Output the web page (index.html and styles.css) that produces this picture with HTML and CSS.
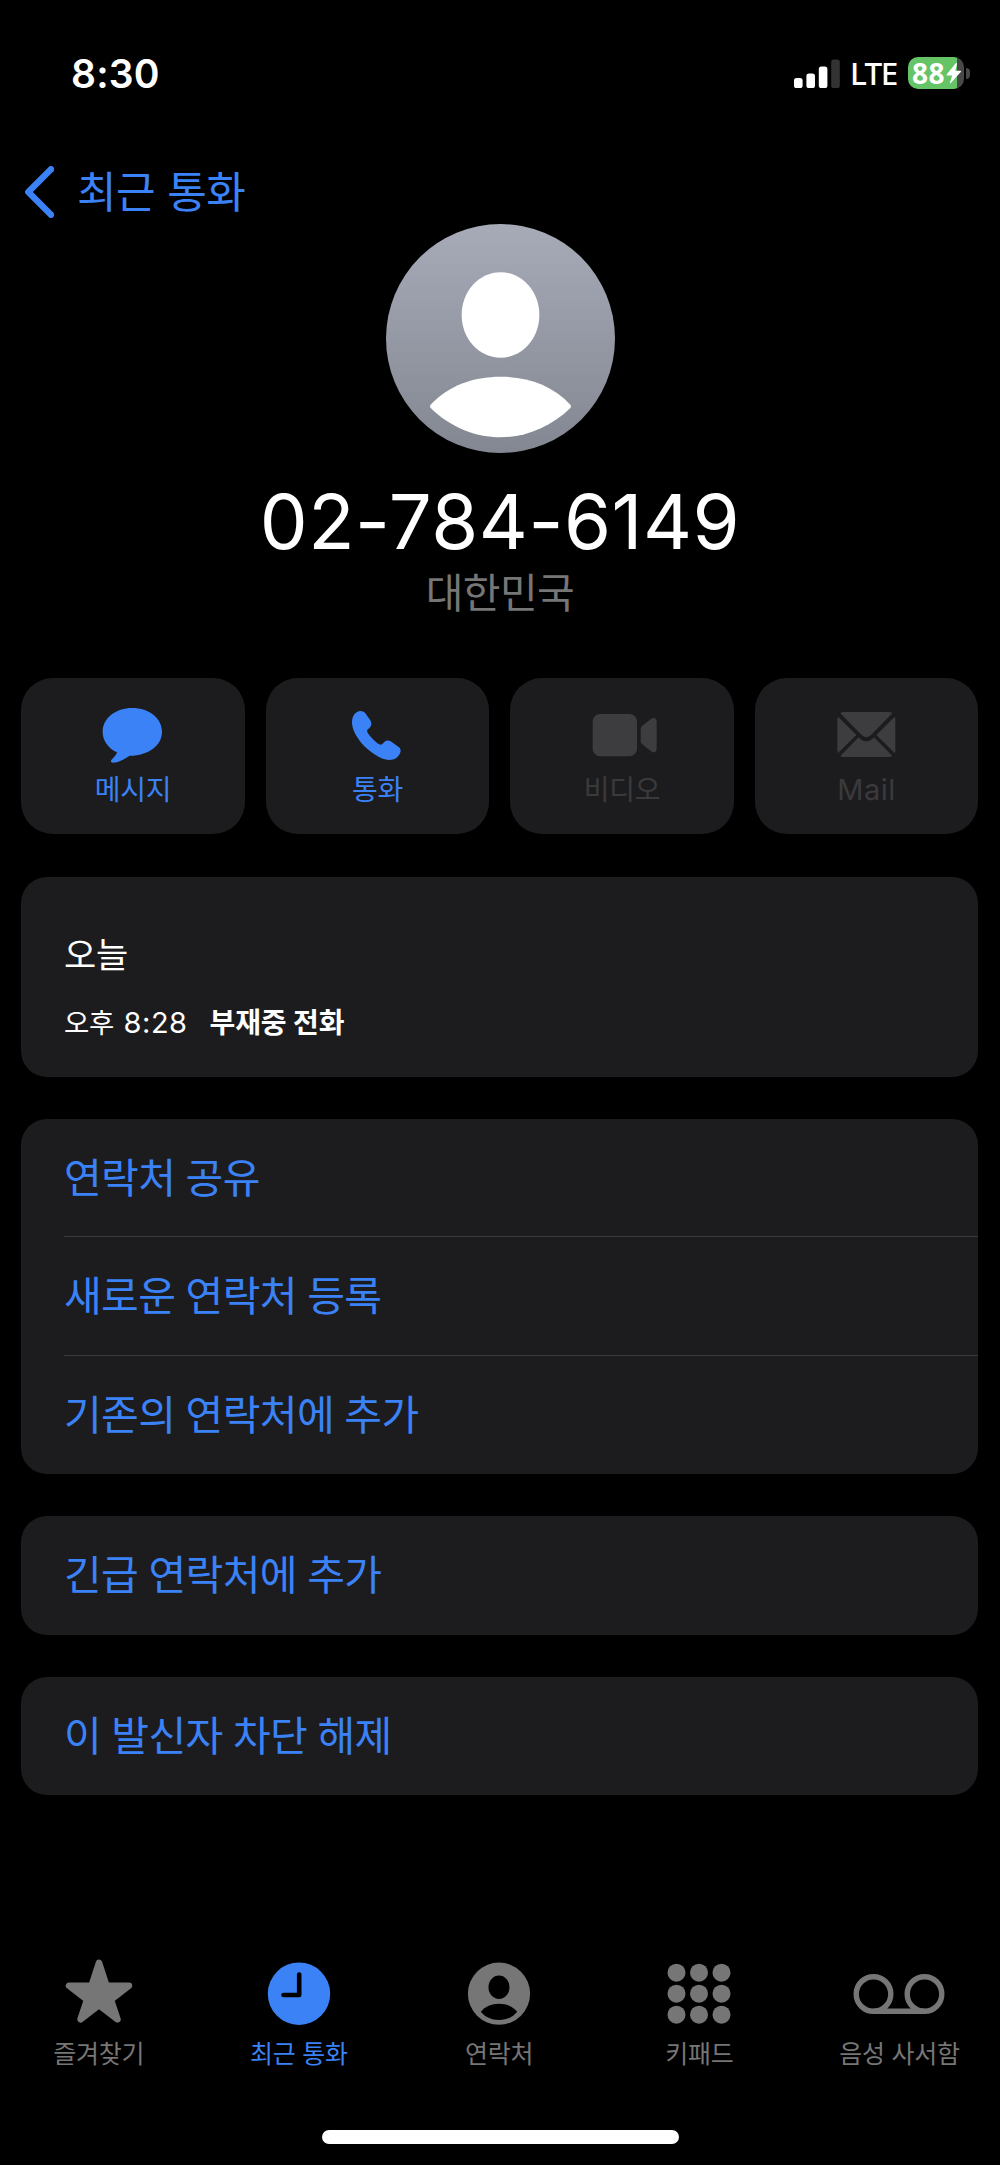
FILE: index.html
```html
<!DOCTYPE html>
<html lang="ko">
<head>
<meta charset="utf-8">
<title>최근 통화</title>
<link rel="stylesheet" href="styles.css">
</head>
<body>
<div class="screen">
  <header class="status">
    <time class="status-time">8:30</time>
    <div class="status-right">
      <svg class="signal" width="46" height="29" viewBox="0 0 46 29">
        <rect x="0" y="19" width="8.6" height="10" rx="2.6" fill="#fff"/>
        <rect x="12.4" y="14.5" width="8.6" height="14.5" rx="2.6" fill="#fff"/>
        <rect x="24.8" y="7.5" width="8.6" height="21.5" rx="2.6" fill="#fff"/>
        <rect x="37.2" y="0.5" width="8.6" height="28.5" rx="2.6" fill="#333"/>
      </svg>
      <span class="carrier">LTE</span>
      <div class="battery">
        <div class="battery-body">
          <span class="battery-level">88</span>
          <svg class="bolt" width="16" height="21" viewBox="0 0 16 21"><path d="M9.8.3 .8 11.3q-.7 1.2.6 1.2H6.2L3.8 20q-.2 1 .7.3L14.8 9q.8-1.2-.6-1.2H9.300L11 .8Q11-.5 9.800.3Z" fill="#fff"/></svg>
        </div>
        <span class="battery-nub"></span>
      </div>
    </div>
  </header>

  <nav class="nav">
    <svg width="30" height="52" viewBox="0 0 30 52"><path d="M27 3.300 4.300 26 27 48.700" fill="none" stroke="#3b82f7" stroke-width="6.400" stroke-linecap="round" stroke-linejoin="round"/></svg>
    <span class="nav-title">최근 통화</span>
  </nav>

  <section class="profile">
    <svg class="avatar" viewBox="48 42 687 687">
      <defs><linearGradient id="sky" x1="0" y1="0" x2="0" y2="1"><stop offset="0" stop-color="#a7abb8"/><stop offset="1" stop-color="#828791"/></linearGradient></defs>
      <circle cx="391.500" cy="385.500" r="343.500" fill="url(#sky)"/>
      <path d="M391.500 187C456 187 508 244 508 315S456 443 391.500 443 275 386 275 315 327 187 391.500 187Z" fill="#fff"/>
      <path d="M182 594Q178 589 182 584C236 526 310 500 391.500 500S548 526 601 584Q605 589 601 594C542 652 465 682 391.500 682S241 652 182 594Z" fill="#fff"/>
    </svg>
    <h1 class="number">02-784-6149</h1>
    <p class="country">대한민국</p>
  </section>

  <section class="actions">
    <button class="action">
      <svg viewBox="280 132 240 192"><path d="M398 144C448 144 487 175 487 215S448 287 390 287C375 297 355 308 339 308Q331 307 335 300C343 292 350 285 352 277C325 264 309 242 309 215C309 175 348 144 398 144Z"/></svg>
      <span>메시지</span>
    </button>
    <button class="action">
      <svg viewBox="1013 132 240 192"><path d="M1084 153C1091 153 1095 156 1099 161L1113 181C1118 189 1117 197 1111 203L1106 208C1102 211 1103 215 1105 218C1112 230 1129 246 1140 253C1143 255 1146 255 1149 252L1155 246C1160 241 1167 240 1174 244L1197 260C1204 265 1206 272 1202 280C1195 295 1184 300 1170 300C1142 299 1110 275 1086 249C1068 226 1058 206 1058 187C1058 168 1068 153 1084 153Z"/></svg>
      <span>통화</span>
    </button>
    <button class="action disabled">
      <svg viewBox="247 132 240 192"><rect x="279" y="162" width="133" height="127" rx="23"/><path d="M423 207Q423 202 427 198L454 177Q461 172 466 175 471 178 471 185V266Q471 273 466 276 461 279 454 274L427 252Q423 249 423 244Z"/></svg>
      <span>비디오</span>
    </button>
    <button class="action disabled">
      <svg viewBox="980 132 240 192"><path d="M1020 160Q1024 156 1030 156H1166Q1172 156 1176 160L1112 225Q1098 238 1084 225ZM1013 170 1068 225 1013 279Q1011 276 1011 270V179Q1011 174 1013 170ZM1183 170Q1185 174 1185 179V270Q1185 276 1183 279L1128 225ZM1075 232 1079 236Q1098 252 1117 236L1121 232 1176 288Q1172 291 1166 291H1030Q1024 291 1020 288Z"/></svg>
      <span class="latin">Mail</span>
    </button>
  </section>

  <section class="card history">
    <h2 class="history-day">오늘</h2>
    <p class="history-entry"><time class="history-time">오후 <span class="digits">8:28</span></time><strong>부재중 전화</strong></p>
  </section>

  <section class="card">
    <a class="row">연락처 공유</a>
    <a class="row">새로운 연락처 등록</a>
    <a class="row">기존의 연락처에 추가</a>
  </section>
  <section class="card"><a class="row">긴급 연락처에 추가</a></section>
  <section class="card"><a class="row">이 발신자 차단 해제</a></section>

  <footer class="tabs">
    <a class="tab">
      <svg viewBox="0 0 100 70"><path d="M50 6.500 57.500 29.500H80L62 43.500 68.500 63 50 48.900 31.500 63 38 43.500 20 29.500H42.500Z" transform="translate(0 -.7)" stroke-width="6.500" stroke-linejoin="round" stroke="#767676"/></svg>
      <span>즐겨찾기</span>
    </a>
    <a class="tab active">
      <svg viewBox="0 0 100 70"><circle cx="50" cy="36.700" r="31.200"/><path d="M50.200 17.500V38H34.500" fill="none" stroke="#000" stroke-width="4.600" stroke-linecap="round" stroke-linejoin="round"/></svg>
      <span>최근 통화</span>
    </a>
    <a class="tab">
      <svg viewBox="0 0 100 70"><circle cx="50" cy="36.700" r="31.100"/><ellipse cx="50" cy="30.300" rx="10.500" ry="11.700" fill="#000"/><path d="M31.800 54.800C36 49.500 42.500 46.700 50 46.700S64 49.500 68.200 54.800C64 60 57.500 63 50 63S36 60 31.800 54.800Z" fill="#000"/></svg>
      <span>연락처</span>
    </a>
    <a class="tab">
      <svg viewBox="0 0 100 70"><g><circle cx="27.500" cy="15.700" r="9"/><circle cx="50" cy="15.700" r="9"/><circle cx="72.500" cy="15.700" r="9"/><circle cx="27.500" cy="36.700" r="9"/><circle cx="50" cy="36.700" r="9"/><circle cx="72.500" cy="36.700" r="9"/><circle cx="27.500" cy="57.700" r="9"/><circle cx="50" cy="57.700" r="9"/><circle cx="72.500" cy="57.700" r="9"/></g></svg>
      <span>키패드</span>
    </a>
    <a class="tab">
      <svg viewBox="0 0 100 70"><g fill="none" stroke="#767676" stroke-width="5.400"><circle cx="24.500" cy="37" r="17.300"/><circle cx="75.500" cy="37" r="17.300"/><path d="M24.500 54.300H75.500"/></g></svg>
      <span>음성 사서함</span>
    </a>
  </footer>
  <div class="home-indicator"></div>
</div>
</body>
</html>
```

FILE: styles.css
```css
* { box-sizing: border-box; }

body {
  margin: 0;
  background: #000;
  color: #fff;
  font-family: Inter, "Noto Sans CJK KR", sans-serif;
  letter-spacing: -0.24px;
}

h1, h2, p { margin: 0; font-weight: 400; }

.screen {
  width: 1000px;
  height: 2165px;
  display: flex;
  flex-direction: column;
  overflow: hidden;
}

/* Status bar */
.status {
  height: 146px;
  flex: none;
  display: flex;
  align-items: center;
  justify-content: space-between;
  padding: 0 30px 0 71px;
}
.status-time { font-size: 39px; font-weight: 600; letter-spacing: 0.2px; }
.status-right { display: flex; align-items: center; }
.signal { margin-right: 10px; }
.carrier {
  width: 58px;
  font: 500 31.500px/40px "Noto Sans", sans-serif;
  letter-spacing: -1.600px;
  padding-bottom: 1px;
}
.battery { display: flex; align-items: center; gap: 2px; }
.battery-body {
  width: 56px;
  height: 32px;
  padding-left: 4px;
  border-radius: 10px;
  display: flex;
  align-items: center;
  background: linear-gradient(90deg, #65c466 49.500px, #48484a 49.500px);
}
.battery-level { font: 700 28px/32px "Open Sans", sans-serif; letter-spacing: 0.5px; }
.bolt { margin-left: 1px; flex: none; }
.battery-nub { width: 4px; height: 11px; border-radius: 0 5px 5px 0; background: #48484a; }

/* Navigation */
.nav {
  height: 78px;
  flex: none;
  display: flex;
  align-items: center;
  gap: 23px;
  padding: 13px 0 0 24px;
  color: #3b82f7;
}
.nav-title { font-size: 43px; line-height: 60px; letter-spacing: -0.600px; word-spacing: 0.800px; }

/* Contact header */
.profile {
  height: 454px;
  flex: none;
  display: flex;
  flex-direction: column;
  align-items: center;
}
.avatar { width: 229px; height: 229px; }
.number {
  margin-top: 22px;
  font-size: 76px;
  line-height: 92px;
  letter-spacing: 0.500px;
}
.country {
  margin-top: -2px;
  font-size: 41px;
  line-height: 56px;
  letter-spacing: -0.600px;
  color: #767676;
}

/* Quick actions */
.actions {
  display: grid;
  grid-template-columns: repeat(4, 1fr);
  gap: 21px;
  margin: 0 21.700px 0 21.200px;
}
.action {
  height: 156px;
  padding: 26px 0 0;
  border: 0;
  border-radius: 32px;
  background: #1c1c1e;
  color: #3b82f7;
  font: inherit;
  letter-spacing: inherit;
  display: flex;
  flex-direction: column;
  align-items: center;
}
.action svg { width: 80px; height: 64px; fill: #3b82f7; }
.action span { font-size: 28px; line-height: 40px; margin-top: 2px; }
.action .latin { font-size: 29px; letter-spacing: 0.500px; }
.action.disabled { color: #3a3a3c; }
.action.disabled svg { fill: #3d3d40; }

/* Cards */
.card {
  margin: 42.600px 21.700px 0 21.200px;
  border-radius: 26px;
  background: #1c1c1e;
}
.history { height: 200px; padding: 56px 42.800px 0; }
.history-day { font-size: 35px; line-height: 44px; }
.history-entry { display: flex; margin-top: 26px; font-size: 27.500px; line-height: 40px; }
.history-time { margin-right: 22px; word-spacing: 2px; }
.history-entry strong { font-size: 28px; letter-spacing: -0.100px; word-spacing: 0; }
.digits { font-size: 29px; letter-spacing: 0.500px; }

.row {
  display: flex;
  align-items: center;
  height: 118.200px;
  padding-bottom: 6px;
  margin-left: 42.800px;
  color: #3b82f7;
  font-size: 41px;
  letter-spacing: -0.600px;
  word-spacing: -0.700px;
}
.row:not(:last-child) { border-bottom: 1px solid #3a3a3c; padding-bottom: 5px; }

/* Tab bar */
.tabs {
  margin-top: auto;
  display: grid;
  grid-template-columns: repeat(5, 200.200px);
  margin-left: -1.400px;
  height: 173px;
}
.tab {
  display: flex;
  flex-direction: column;
  align-items: center;
  color: #767676;
  font-size: 25px;
}
.tab svg { width: 100px; height: 70px; fill: #767676; }
.tab span { margin-top: 9px; line-height: 36px; }
.tab.active { color: #3b82f7; }
.tab.active svg { fill: #3b82f7; }

.home-indicator {
  flex: none;
  width: 357px;
  height: 14px;
  margin: 0 auto 21px;
  border-radius: 7px;
  background: #fff;
}
```
